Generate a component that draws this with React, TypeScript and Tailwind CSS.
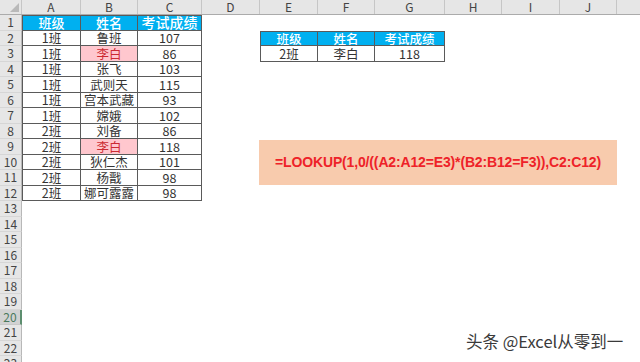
// Excel 工作表截图：LOOKUP 多条件查找示例
import React from 'react'

const COLS: { key: string; w: number }[] = [
  { key: 'A', w: 59 },
  { key: 'B', w: 57 },
  { key: 'C', w: 64 },
  { key: 'D', w: 58 },
  { key: 'E', w: 58 },
  { key: 'F', w: 57 },
  { key: 'G', w: 70 },
  { key: 'H', w: 57 },
  { key: 'I', w: 58 },
  { key: 'J', w: 57 },
  { key: 'K', w: 60 },
]

const HEAD = ['班级', '姓名', '考试成绩']

// A1:C12
const TABLE1: string[][] = [
  HEAD,
  ['1班', '鲁班', '107'],
  ['1班', '李白', '86'],
  ['1班', '张飞', '103'],
  ['1班', '武则天', '115'],
  ['1班', '宫本武藏', '93'],
  ['1班', '嫦娥', '102'],
  ['2班', '刘备', '86'],
  ['2班', '李白', '118'],
  ['2班', '狄仁杰', '101'],
  ['2班', '杨戬', '98'],
  ['2班', '娜可露露', '98'],
]

// E2:G3
const TABLE2: string[][] = [HEAD, ['2班', '李白', '118']]

const PINK_ROWS = [3, 9]
const ROW_COUNT = 23
const FONT = { fontFamily: '"Noto Sans CJK SC", "Noto Sans", sans-serif' }

type Cell = { text: string; cls: string }

function getCell(row: number, col: number): Cell {
  // table 1 : cols 0..2, rows 1..12
  if (col <= 2 && row >= 1 && row <= 12) {
    const text = TABLE1[row - 1][col]
    let cls = 'border-r border-b border-[#5a5a5a]'
    if (col === 0) cls += ' border-l'
    if (row === 1) cls += ' border-t'
    if (row === 1) {
      cls += ' bg-[#00b0f0] text-white font-medium'
      cls += col === 2 ? ' text-[14px]' : ' text-[13px]'
    } else if (col === 1 && PINK_ROWS.includes(row)) {
      cls += ' bg-[#ffc7ce] text-[#cc2a33] text-[12.5px]'
    } else {
      cls += ' text-[#333] text-[12.5px]'
    }
    return { text, cls }
  }
  // table 2 : cols 4..6, rows 2..3
  if (col >= 4 && col <= 6 && row >= 2 && row <= 3) {
    const text = TABLE2[row - 2][col - 4]
    let cls = 'border-r border-b border-[#5a5a5a]'
    if (col === 4) cls += ' border-l'
    if (row === 2) cls += ' border-t bg-[#00b0f0] text-white font-medium text-[12.5px]'
    else cls += ' text-[#333] text-[12.5px]'
    return { text, cls }
  }
  return { text: '', cls: '' }
}

function ColumnHeader() {
  return (
    <div className="flex h-[15px] bg-[#e6e6e6] border-b border-[#ababab]">
      <div className="relative w-[22px] shrink-0 border-r border-[#c6c6c6]">
        <div className="absolute right-[2px] bottom-[2px] w-0 h-0 border-l-[9px] border-l-transparent border-b-[9px] border-b-[#b9b9b9]" />
      </div>
      {COLS.map((c) => (
        <div
          key={c.key}
          style={{ width: c.w }}
          className="shrink-0 flex items-center justify-center border-r border-[#c6c6c6] text-[12px] leading-[14px] text-[#444]"
        >
          {c.key}
        </div>
      ))}
    </div>
  )
}

function SheetRow({ row }: { row: number }) {
  const selected = row === 20
  return (
    <div className="flex h-[15.5px]">
      <div
        className={`w-[22px] shrink-0 flex items-center justify-center text-[12px] leading-[14px] border-b ${
          selected
            ? 'bg-[#d2d2d2] text-[#4b7a5e] border-r-2 border-r-[#5d8e6f] border-b-[#c8c8c8]'
            : 'bg-[#e6e6e6] text-[#444] border-r border-r-[#b8b8b8] border-b-[#d6d6d6]'
        }`}
      >
        {row}
      </div>
      {COLS.map((c, i) => {
        const cell = getCell(row, i)
        return (
          <div
            key={c.key}
            style={{ width: c.w }}
            className={`shrink-0 box-border flex items-center justify-center leading-[13px] whitespace-nowrap ${cell.cls}`}
          >
            {cell.text}
          </div>
        )
      })}
    </div>
  )
}

export default function App() {
  const rows = Array.from({ length: ROW_COUNT }, (_, i) => i + 1)
  return (
    <div className="relative w-[640px] h-[362px] overflow-hidden bg-white" style={FONT}>
      <ColumnHeader />
      {rows.map((r) => (
        <SheetRow key={r} row={r} />
      ))}

      {/* 公式文本框 */}
      <div className="absolute left-[259px] top-[140px] w-[358px] h-[45px] bg-[#f8cbad] flex items-center justify-center">
        <span
          className="text-[14px] text-[#ee2228] font-bold tracking-[-0.15px]"
          style={{ fontFamily: '"Liberation Sans", Arial, sans-serif' }}
        >
          =LOOKUP(1,0/((A2:A12=E3)*(B2:B12=F3)),C2:C12)
        </span>
      </div>

      {/* 水印 */}
      <div
        className="absolute left-[466px] top-[333px] text-[16.5px] leading-none text-[#3a3a3a] whitespace-nowrap"
        style={{ textShadow: '0 0 2px #fff, 0 0 2px #fff' }}
      >
        头条 @Excel从零到一
      </div>
    </div>
  )
}
